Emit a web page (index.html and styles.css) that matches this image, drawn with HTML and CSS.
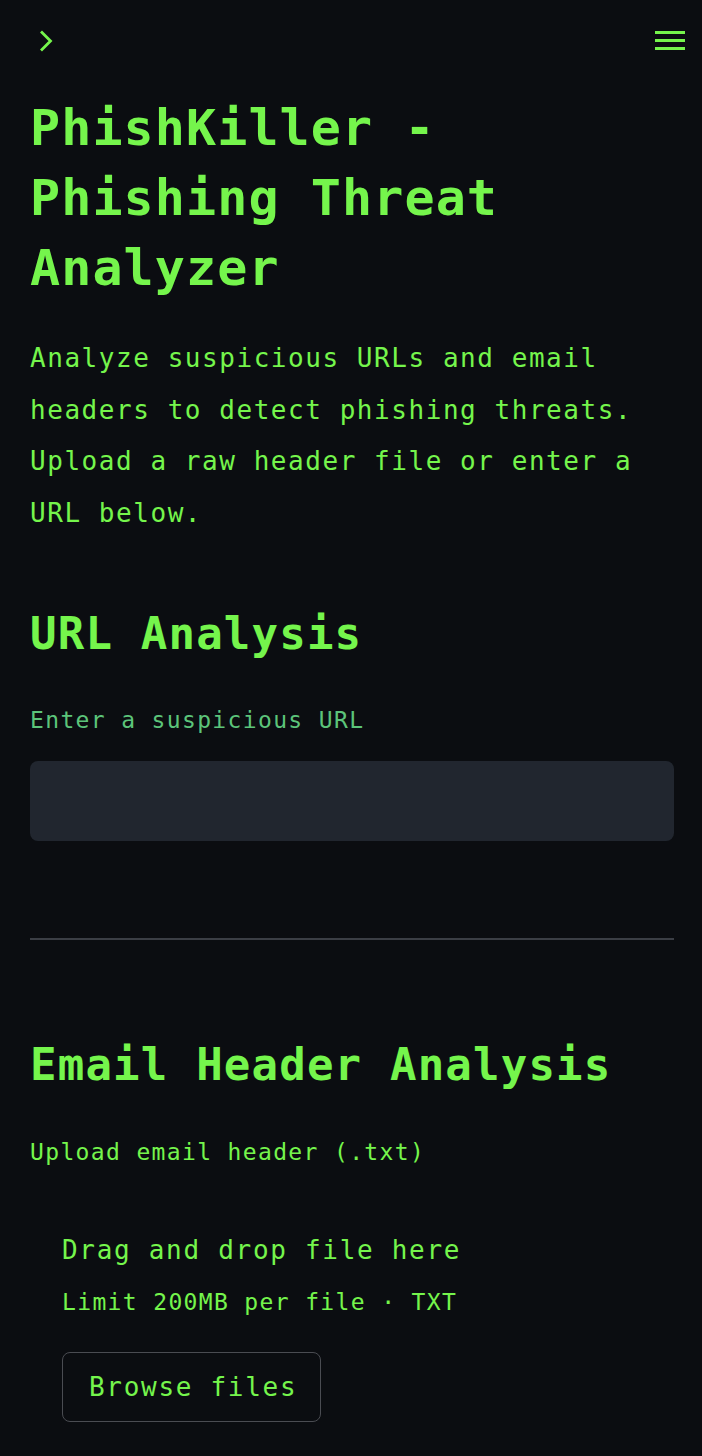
FILE: index.html
```html
<!DOCTYPE html>
<html lang="en">
<head>
<meta charset="utf-8">
<title>PhishKiller - Phishing Threat Analyzer</title>
<link rel="stylesheet" href="styles.css">
</head>
<body>
<header class="topbar">
  <svg class="chevron" width="14" height="22" viewBox="0 0 14 22" aria-hidden="true">
    <path d="M2 1.5 L11.5 11 L2 20.5" fill="none" stroke="#75f54c" stroke-width="2.8" stroke-linejoin="miter"/>
  </svg>
  <svg class="burger" width="30" height="19" viewBox="0 0 30 19" aria-hidden="true">
    <rect x="0" y="0" width="30" height="3" fill="#75f54c"/>
    <rect x="0" y="8" width="30" height="3" fill="#75f54c"/>
    <rect x="0" y="16" width="30" height="3" fill="#75f54c"/>
  </svg>
</header>
<main class="main">
  <h1 class="title">PhishKiller - Phishing Threat Analyzer</h1>
  <p class="intro">Analyze suspicious URLs and email headers to detect phishing threats. Upload a raw header file or enter a URL below.</p>

  <h2 class="section-title">URL Analysis</h2>
  <label class="field-label" for="url">Enter a suspicious URL</label>
  <input class="url-input" id="url" type="text">

  <hr class="divider">

  <h2 class="section-title email-title">Email Header Analysis</h2>
  <div class="upload-label">Upload email header (.txt)</div>
  <div class="dropzone">
    <div class="drop-main">Drag and drop file here</div>
    <div class="drop-sub">Limit 200MB per file · TXT</div>
    <button class="browse" type="button">Browse files</button>
  </div>
</main>
</body>
</html>
```
FILE: styles.css
```css
html, body {
  margin: 0;
  padding: 0;
  background: #0b0d11;
}
body {
  font-family: "DejaVu Sans Mono", "Liberation Mono", monospace;
  color: #75f54c;
  min-height: 1456px;
}
.topbar {
  height: 81px;
  display: flex;
  align-items: center;
  justify-content: space-between;
  padding: 0 17px 0 39px;
  box-sizing: border-box;
}
.chevron, .burger {
  display: block;
}
.main {
  padding: 0 28px 0 30px;
}
.title {
  margin: 12px 0 0;
  font-size: 50px;
  line-height: 70px;
  font-weight: bold;
  letter-spacing: 1.1px;
}
.intro {
  margin: 30px 0 0;
  font-size: 26px;
  line-height: 51.5px;
  letter-spacing: 1.55px;
}
.section-title {
  margin: 68px 0 0;
  font-size: 44px;
  line-height: 53px;
  font-weight: bold;
  letter-spacing: 1.2px;
}
.field-label {
  display: block;
  margin-top: 45px;
  font-size: 23px;
  line-height: 30px;
  letter-spacing: 1.35px;
  color: #5cc47a;
}
.url-input {
  display: block;
  margin: 26px 0 0;
  width: 100%;
  height: 80px;
  box-sizing: border-box;
  border: none;
  border-radius: 8px;
  background: #21262f;
  outline: none;
  padding: 0 20px;
  font-family: inherit;
  font-size: 26px;
  color: #75f54c;
}
.divider {
  margin: 97px 0 0;
  border: none;
  height: 2px;
  background: #3b3e45;
}
.section-title.email-title {
  margin-top: 98px;
}
.upload-label {
  margin-top: 46px;
  font-size: 23px;
  line-height: 30px;
  letter-spacing: 1.35px;
}
.dropzone {
  margin-top: 36px;
  padding: 32px 32px 30px;
}
.drop-main {
  font-size: 26px;
  line-height: 30px;
  letter-spacing: 1.7px;
}
.drop-sub {
  margin-top: 22px;
  font-size: 23px;
  line-height: 30px;
  letter-spacing: 1.35px;
}
.browse {
  margin-top: 35px;
  height: 70px;
  padding: 0 23px 0 26px;
  display: flex;
  align-items: center;
  background: transparent;
  border: 1.5px solid #4a4c52;
  border-radius: 8px;
  color: #75f54c;
  font-family: inherit;
  font-size: 26px;
  letter-spacing: 1.7px;
  cursor: pointer;
}
```
